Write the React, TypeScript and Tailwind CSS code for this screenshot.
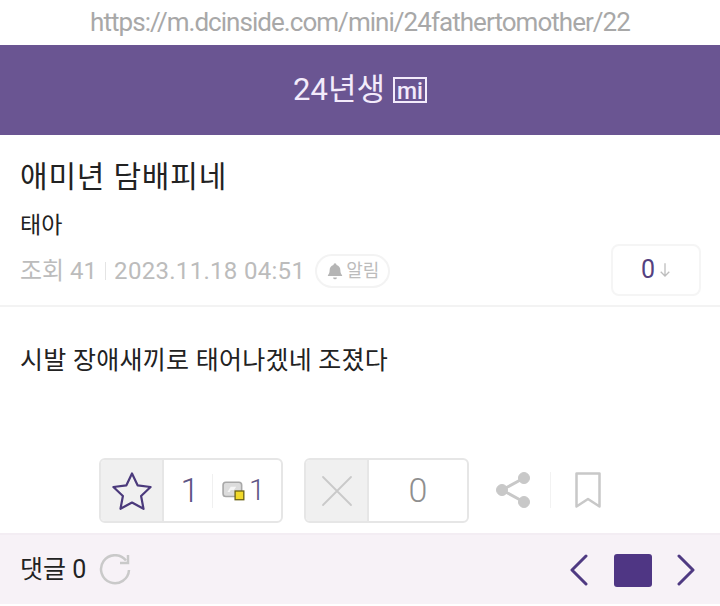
import React from "react";

const kr = "font-['Roboto','Noto_Sans_CJK_KR',sans-serif]";

export default function App() {
  return (
    <div className={`w-[720px] h-[606px] overflow-hidden bg-white ${kr}`}>
      <div className="h-[45px] flex items-center justify-center text-[26px] tracking-[-0.96px] text-[#a8a8a8]">
        https://m.dcinside.com/mini/24fathertomother/22
      </div>
      <header className="h-[90px] bg-[#6a5592] flex items-center justify-center gap-[8px] text-[#f3ebfb]">
        <span className="text-[31px]">24년생</span>
        <span className="w-[34px] h-[26px] border-2 border-[#f3ebfb] flex items-center justify-center pt-[2px] text-[23px] leading-none font-medium">
          mi
        </span>
      </header>

      <section className="h-[172px] border-b-2 border-[#f3f3f3] px-[20px] pt-[22px] relative">
        <h1 className="text-[30px] leading-[40px] text-[#222] tracking-[0.8px]">애미년 담배피네</h1>
        <div className="mt-[14px] text-[23px] leading-[30px] text-[#222]">태아</div>
        <div className="mt-[13px] flex items-center text-[24px] leading-[32px] text-[#bcbcbc]">
          <span>조회 41</span>
          <span className="w-px h-[18px] bg-[#e4e4e4] mx-[8px]" />
          <span className="tracking-[0.3px]">2023.11.18 04:51</span>
          <span className="ml-[10px] w-[75px] h-[34px] border-2 border-[#f3f3f3] rounded-full flex items-center justify-center gap-[2px] text-[18px]">
            <svg viewBox="0 0 24 24" className="w-[18px] h-[20px]" fill="#b5b5b5">
              <path d="M12 1.5a2 2 0 0 1 2 2v.6c3.4.9 5.2 3.7 5.2 7.2 0 3 .8 4.7 2.3 6.2v1.3H2.500v-1.300c1.500-1.500 2.300-3.200 2.300-6.200 0-3.500 1.800-6.300 5.200-7.200v-.6a2 2 0 0 1 2-2zM9.500 20.500h5a2.500 2.500 0 0 1-5 0z" />
            </svg>
            알림
          </span>
        </div>
        <div className="absolute right-[19px] top-[109px] w-[90px] h-[52px] border-2 border-[#f5f5f5] rounded-[8px] flex items-center justify-center gap-[4px]">
          <span className="text-[25px] text-[#54417f]">0</span>
          <svg viewBox="0 0 14 18" className="w-[12px] h-[16px]" fill="none" stroke="#bdbdbd" strokeWidth="1.500">
            <path d="M7 1v15M2 11l5 5 5-5" />
          </svg>
        </div>
      </section>

      <article className="h-[151px] px-[20px] pt-[38px] text-[25px] leading-[32px] text-[#222] tracking-[0.25px]">
        시발 장애새끼로 태어나겠네 조졌다
      </article>

      <div className="h-[75px] flex items-start pl-[99px]">
        <div className="w-[184px] h-[65px] border-2 border-[#e6e6e6] rounded-[6px] flex items-stretch overflow-hidden">
          <div className="w-[63px] bg-[#f0f0f0] border-r-2 border-[#e6e6e6] flex items-center justify-center">
            <svg viewBox="0 0 44 44" className="w-[44px] h-[44px]" fill="none" stroke="#4b3a7c" strokeWidth="2.200" strokeLinejoin="round">
              <path d="M22 4.500l5.600 11.800 13 1.700-9.500 9 2.400 12.800L22 33.500 10.500 39.800l2.400-12.800-9.500-9 13-1.700z" />
            </svg>
          </div>
          <div className="flex-1 flex items-center text-[#5e5585]">
            <span className="w-[48px] pl-[4px] text-center text-[34px] font-light">1</span>
            <span className="w-px h-[34px] bg-[#f0f0f0]" />
            <svg viewBox="0 0 22 20" className="ml-[9px] w-[24px] h-[22px]">
              <rect x="1" y="2" width="17" height="13" rx="2.500" fill="#dcdcdc" stroke="#a8a8a8" strokeWidth="1.500" />
              <path d="M5 11l3-5h5l-2 3H8l-1 2z" fill="#f6f6f6" />
              <rect x="12" y="10" width="8" height="8" fill="#f1d92a" stroke="#6b6215" strokeWidth="1.200" />
            </svg>
            <span className="ml-[3px] text-[29px] font-light">1</span>
          </div>
        </div>

        <div className="ml-[21px] w-[165px] h-[65px] border-2 border-[#e6e6e6] rounded-[6px] flex items-stretch overflow-hidden">
          <div className="w-[63px] bg-[#f0f0f0] border-r-2 border-[#e6e6e6] flex items-center justify-center">
            <svg viewBox="0 0 32 32" className="w-[32px] h-[32px]" fill="none" stroke="#c9c9c9" strokeWidth="1.800" strokeLinecap="round">
              <path d="M2 2l28 28M30 2L2 30" />
            </svg>
          </div>
          <div className="flex-1 flex items-center justify-center text-[34px] font-light text-[#8f8f8f]">0</div>
        </div>

        <svg viewBox="0 0 34 36" className="ml-[27px] mt-[14px] w-[34px] h-[36px]" fill="#c8c8c8" stroke="#c8c8c8">
          <path d="M6 18L28 6M6 18l22 12" fill="none" strokeWidth="3" />
          <circle cx="6" cy="18" r="5.500" />
          <circle cx="28" cy="6" r="5.500" />
          <circle cx="28" cy="30" r="5.500" />
        </svg>
        <span className="ml-[20px] mt-[14px] w-px h-[36px] bg-[#f2f2f2]" />
        <svg viewBox="0 0 26 36" className="ml-[24px] mt-[14px] w-[26px] h-[36px]" fill="none" stroke="#c8c8c8" strokeWidth="2.500" strokeLinejoin="round">
          <path d="M1.500 1.500h23v33L13 27 1.500 34.500z" />
        </svg>
      </div>

      <footer className="h-[71px] bg-[#f7f2f7] border-t-2 border-[#f3edf3] flex items-center pt-[1px] pl-[20px] pr-[25px]">
        <span className="text-[25px] text-[#222]">댓글 0</span>
        <svg viewBox="0 0 32 32" className="ml-[13px] w-[32px] h-[32px]" fill="none" stroke="#c9c9c9" strokeWidth="2.500">
          <path d="M27 6.500A14 14 0 1 0 30 16" />
          <path d="M29 1v8h-8" />
        </svg>
        <div className="ml-auto flex items-center">
          <svg viewBox="0 0 18 32" className="w-[18px] h-[32px]" fill="none" stroke="#4f3a82" strokeWidth="3" strokeLinecap="round" strokeLinejoin="round">
            <path d="M16 2L2 16l14 14" />
          </svg>
          <div className="ml-[26px] w-[38px] h-[33px] rounded-[3px] bg-[#4f3684]" />
          <svg viewBox="0 0 18 32" className="ml-[25px] w-[18px] h-[32px]" fill="none" stroke="#4f3a82" strokeWidth="3" strokeLinecap="round" strokeLinejoin="round">
            <path d="M2 2l14 14L2 30" />
          </svg>
        </div>
      </footer>
    </div>
  );
}
